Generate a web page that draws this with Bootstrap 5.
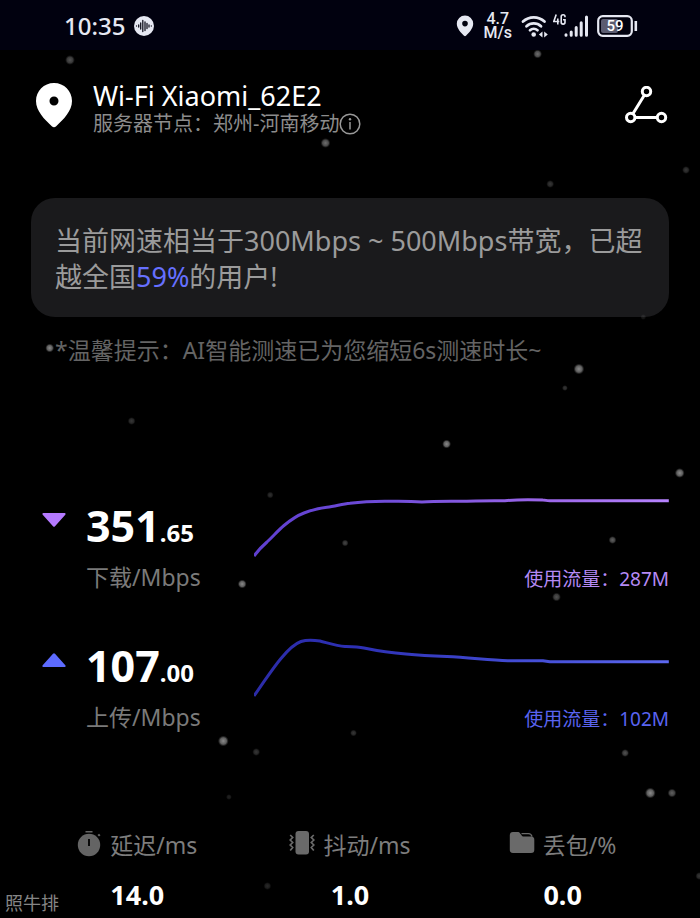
<!DOCTYPE html>
<html lang="zh-CN" data-bs-theme="dark">
<head>
<meta charset="utf-8">
<meta name="viewport" content="width=device-width, initial-scale=1">
<title>网络测速</title>
<link href="https://cdn.jsdelivr.net/npm/bootstrap@5.3.0/dist/css/bootstrap.min.css" rel="stylesheet">
<style>
  body { background: #000; color: #fff; font-family: "Noto Sans", "Noto Sans CJK SC", sans-serif; overflow-x: hidden; }
  svg { display: block; flex: none; }
  .speed-page { min-height: 100vh; }
  .status-strip { background: #01010f; color: #e6e8f2; height: 50px; padding: 2px 62px 0 64px; }
  .clock { font-size: 24px; line-height: 32px; font-weight: 500; }
  .rate { font-family: Roboto, sans-serif; font-size: 16px; line-height: 14px; font-weight: 500; text-align: center; margin: 0 9px 0 10px; }
  .page-pad { padding-left: 31px; padding-right: 31px; }
  .server-bar { padding-top: 32px; }
  .pin-slot { margin: 1px 20px 0 5px; }
  .net-name { font-size: 27px; line-height: 28px; font-weight: 400; }
  .node-line { font-size: 20px; line-height: 28px; color: #8c8c8c; }
  .plain-btn { background: none; border: 0; padding: 0; color: inherit; }
  .summary-box { margin-top: 60px; background: #1a1a1c; border-radius: 24px; padding: 25px 16px 22px 24px; color: #9b9b9b; font-size: 27px; line-height: 36px; }
  .percent { color: #6670ff; }
  .hint { margin: 19px 0 0 24px; font-size: 23px; line-height: 28px; color: #646464; }
  .results { margin-top: 132px; }
  .result-row { height: 140px; }
  .result-main { width: 35%; }
  .arrow-slot { margin: 17px 20px 0 11px; }
  .big-num { font-size: 43px; line-height: 60px; font-weight: 700; }
  .big-num small { font-size: 24px; font-weight: 700; }
  .unit { font-size: 23px; line-height: 28px; color: #7a7a7a; }
  .curve { width: 100%; height: 64px; }
  .curve path { fill: none; stroke-width: 3; vector-effect: non-scaling-stroke; stroke-linecap: butt; stroke-linejoin: round; }
  .usage { font-size: 19px; line-height: 28px; margin-top: 5px; text-align: right; }
  .usage-down { color: #b58af5; }
  .usage-up { color: #5a64f0; }
  .stat-title { font-size: 23px; line-height: 32px; color: #7d7d7d; gap: 8px; }
  .stat-value { font-size: 27px; line-height: 36px; font-weight: 700; margin-top: 16px; }
  .stats { margin-top: 53px; }
  .watermark { position: absolute; left: 5px; bottom: 3px; font-size: 18px; line-height: 24px; color: #858585; }
  .stars { position: absolute; left: 0; top: 0; width: 100%; height: 918px; pointer-events: none; }
</style>
<script src="https://cdn.jsdelivr.net/npm/bootstrap@5.3.0/dist/js/bootstrap.bundle.min.js"></script>
</head>
<body>
<div class="speed-page position-relative">

  <div class="status-strip d-flex align-items-center">
    <span class="clock">10:35</span>
    <svg class="ms-2" width="22" height="22" viewBox="0 0 22 22"><circle cx="11" cy="11" r="10" fill="#e6e8f2"/><g stroke="#12121f" stroke-width="1.3" stroke-linecap="round"><path d="M3.5 11h0M5.700 10v2M7.700 8v6M9.800 5.500v11M12 7v8.500M14 8.500v5M16 10v2M18.300 11h0"/></g></svg>
    <svg class="ms-auto" width="18" height="22" viewBox="0 0 18 22"><path fill="#e6e8f2" fill-rule="evenodd" d="M9 .5A8.200 8.200 0 0 0 .8 8.800c0 4.500 4.300 9.200 7.200 12a1.500 1.500 0 0 0 2 0c2.900-2.800 7.200-7.500 7.200-12A8.200 8.200 0 0 0 9 .5zm0 5.300a2.800 2.800 0 1 1 0 5.600 2.800 2.800 0 0 1 0-5.600z"/></svg>
    <div class="rate">4.7<br>M/s</div>
    <svg width="28" height="24" viewBox="0 0 28 24"><g fill="none" stroke="#e6e8f2" stroke-width="2.800" stroke-linecap="round"><path d="M2 7.500a16 16 0 0 1 21.500 0"/><path d="M5.500 12.200a10.800 10.800 0 0 1 14.500 0"/><path d="M9 16.200a5.800 5.800 0 0 1 7.500 0"/></g><circle cx="12.700" cy="20.500" r="2.300" fill="#e6e8f2"/><path fill="#e6e8f2" d="M21.500 17.500v6l-3.600-3zM23.200 17.500v6l3.600-3z"/></svg>
    <svg width="36" height="26" viewBox="0 0 36 26" class="ms-1"><g transform="translate(-1 0)"><g fill="none" stroke="#e6e8f2" stroke-width="1.600"><path d="M4.200 1.500L1.800 8.500h5.500M5.800 5.500v6"/><path d="M13 4.300V3.600a1.900 1.900 0 0 0-3.800 0v5.600a1.900 1.900 0 0 0 3.800 0V6.800h-2"/></g><g stroke="#e6e8f2" stroke-width="3" stroke-linecap="round"><path d="M14 21.700v.5M19.200 19v3.200M24.200 14.500v7.700M29.200 9.700v12.500M34.500 4v18.200"/></g></g></svg>
    <svg class="ms-2" width="41" height="22" viewBox="0 0 41 22" role="img" aria-label="59"><rect x="4" y="4" width="17" height="14" rx="2" fill="#5b5c70"/><rect x="1.200" y="1.200" width="33.600" height="19.600" rx="4.500" fill="none" stroke="#e6e8f2" stroke-width="2.200"/><path d="M38.800 6v10" stroke="#e6e8f2" stroke-width="2.600"/><text x="18" y="16" text-anchor="middle" font-family="Roboto, sans-serif" font-size="15" font-weight="500" fill="#fff">59</text></svg>
  </div>

  <svg class="stars" aria-hidden="true">
    <defs><radialGradient id="star"><stop offset="0" stop-color="#8a8a8a"/><stop offset=".6" stop-color="#5c5c5c"/><stop offset="1" stop-color="#333" stop-opacity="0"/></radialGradient></defs>
    <g fill="url(#star)">
      <circle cx="10%" cy="60" r="5" opacity=".6"/><circle cx="76.800%" cy="54" r="4.500" opacity=".8"/><circle cx="46.500%" cy="143" r="5" opacity=".8"/>
      <circle cx="78.600%" cy="184" r="4" opacity=".4"/><circle cx="98%" cy="170" r="4" opacity=".4"/><circle cx="7.100%" cy="348" r="4.500"/>
      <circle cx="82.700%" cy="369" r="5.500"/><circle cx="80.700%" cy="388" r="3" opacity=".4"/><circle cx="18.800%" cy="421" r="4" opacity=".4"/>
      <circle cx="63.800%" cy="444" r="4.500"/><circle cx="97.100%" cy="473" r="5"/><circle cx="38.600%" cy="495" r="3.500" opacity=".35"/>
      <circle cx="49.300%" cy="543" r="3.500" opacity=".5"/><circle cx="87.500%" cy="540" r="4" opacity=".7"/><circle cx="34.600%" cy="584" r="4.500"/>
      <circle cx="79.500%" cy="597" r="4.500" opacity=".6"/><circle cx="31.900%" cy="741" r="5.500"/><circle cx="36.600%" cy="752" r="4" opacity=".4"/>
      <circle cx="50.500%" cy="733" r="3.500" opacity=".4"/><circle cx="89.300%" cy="753" r="4" opacity=".6"/><circle cx="92.900%" cy="793" r="5.500"/>
      <circle cx="96%" cy="793" r="4.500" opacity=".7"/><circle cx="32.700%" cy="797" r="3" opacity=".25"/><circle cx="38.200%" cy="886" r="4" opacity=".3"/>
      <circle cx="99.900%" cy="876" r="4" opacity=".4"/><circle cx="91.900%" cy="317" r="3" opacity=".2"/>
    </g>
  </svg>

  <header class="server-bar page-pad d-flex align-items-start">
    <svg class="pin-slot" width="37" height="45" viewBox="0 0 37 45"><path fill="#fff" fill-rule="evenodd" d="M18 0C7.800 0 0 8 0 18c0 10 8.500 18.500 15.800 25.200a3.100 3.100 0 0 0 4.400 0C27.500 36.500 36 28 36 18 36 8 28.200 0 18 0zm0 13.500a4.500 4.500 0 1 1 0 9 4.500 4.500 0 0 1 0-9z"/></svg>
    <div class="flex-grow-1">
      <h1 class="net-name mb-0">Wi-Fi Xiaomi_62E2</h1>
      <div class="node-line d-flex align-items-center">服务器节点：郑州-河南移动
        <button class="plain-btn" type="button" aria-label="节点信息"><svg width="22" height="22" viewBox="0 0 22 22"><g fill="none" stroke="#999" stroke-width="1.500"><circle cx="11" cy="11" r="9.800"/><path d="M11 9v7.500"/></g><circle cx="11" cy="6.200" r="1.200" fill="#999"/></svg></button>
      </div>
    </div>
    <button class="plain-btn mt-1" type="button" aria-label="网络拓扑"><svg width="44" height="38" viewBox="0 0 44 38"><g fill="none" stroke="#fff" stroke-width="3"><circle cx="21.500" cy="5.500" r="4.200"/><circle cx="5.700" cy="31.500" r="4.200"/><circle cx="36.500" cy="31.500" r="4.200"/><path d="M19.300 9.200L7.900 27.800M10 31.500h22"/></g></svg></button>
  </header>

  <main class="page-pad">
    <section class="summary-box">当前网速相当于300Mbps ~ 500Mbps带宽，已超越全国<span class="percent">59%</span>的用户!</section>
    <p class="hint">*温馨提示：AI智能测速已为您缩短6s测速时长~</p>

    <section class="results">
      <div class="result-row d-flex">
        <div class="result-main d-flex align-items-start">
          <svg class="arrow-slot" width="24" height="14" viewBox="0 0 24 14"><path fill="#b57aff" d="M1.500 0h21a1 1 0 0 1 .8 1.700L13 13.300a1.400 1.400 0 0 1-2 0L.7 1.700A1 1 0 0 1 1.500 0z"/></svg>
          <div><div class="big-num">351<small>.65</small></div><div class="unit">下载/Mbps</div></div>
        </div>
        <div class="flex-grow-1">
          <svg class="curve" viewBox="0 0 415 64" preserveAspectRatio="none"><defs><linearGradient id="gd" gradientUnits="userSpaceOnUse" x1="0" y1="0" x2="415" y2="0"><stop offset="0" stop-color="#5f3fd0"/><stop offset=".3" stop-color="#6f4cd8"/><stop offset=".7" stop-color="#9b66e8"/><stop offset="1" stop-color="#b784ff"/></linearGradient></defs><path stroke="url(#gd)" d="M0 60C4 54.500 9 49.500 13 46C19 40.500 24 34.500 30 29.500C36 24.500 42 20 50 17C58 14 66 12 73 11.300C81 10.500 88 8 96 7.300C107 6 119 5.400 131 5.300C145 5 157 5 168 6C180 5 195 5.300 211 5.300C220 4.500 240 4.700 251 4.700C258 4 280 3.700 289 4C292 4 292 4.800 296 4.800H415"/></svg>
          <div class="usage usage-down">使用流量：287M</div>
        </div>
      </div>
      <div class="result-row d-flex">
        <div class="result-main d-flex align-items-start">
          <svg class="arrow-slot" width="24" height="14" viewBox="0 0 24 14"><path fill="#5d6bff" d="M1.500 14h21a1 1 0 0 0 .8-1.700L13 .7a1.400 1.400 0 0 0-2 0L.7 12.300A1 1 0 0 0 1.500 14z"/></svg>
          <div><div class="big-num">107<small>.00</small></div><div class="unit">上传/Mbps</div></div>
        </div>
        <div class="flex-grow-1">
          <svg class="curve" viewBox="0 0 415 64" preserveAspectRatio="none"><defs><linearGradient id="gu" gradientUnits="userSpaceOnUse" x1="0" y1="0" x2="415" y2="0"><stop offset="0" stop-color="#2c2ca8"/><stop offset=".25" stop-color="#2d30b4"/><stop offset=".7" stop-color="#4650d8"/><stop offset="1" stop-color="#5d68f0"/></linearGradient></defs><path stroke="url(#gu)" d="M0 60C9 47 19 32 27 22.500C34 14 40 8 47 5.500C53 3.500 60 4 66 5C74 7 83 10 91 10.500C98 10.700 104 10.800 110 12C122 14.500 138 17 152 18C166 19.300 180 20 193 20.500C215 21.500 235 24 254 24.700C266 24.800 280 24.500 289 24.800L296 25.700H415"/></svg>
          <div class="usage usage-up">使用流量：102M</div>
        </div>
      </div>
    </section>

    <section class="stats row g-0 text-center">
      <div class="col-4">
        <div class="stat-title d-flex justify-content-center align-items-center"><svg width="25" height="28" viewBox="0 0 25 28"><g fill="#646464"><circle cx="12" cy="14" r="11.200"/><path d="M8.500 0h7v1.600h-7zM20.500 4l1.600-1.300 1.400 1.600-1.500 1.200z"/></g><path d="M12 8v7" stroke="#000" stroke-width="1.800"/></svg>延迟/ms</div>
        <div class="stat-value">14.0</div>
      </div>
      <div class="col-4">
        <div class="stat-title d-flex justify-content-center align-items-center"><svg width="26" height="28" viewBox="0 0 26 28"><rect x="6.500" y="0" width="13.500" height="23.500" rx="3" fill="#6a6a6a"/><path fill="none" stroke="#6a6a6a" stroke-width="1.700" d="M1.200 4l2.500 2.500L1.200 9l2.500 2.500-2.500 2.500 2.500 2.500-2.500 3M24.800 4l-2.500 2.500 2.500 2.500-2.500 2.500 2.500 2.500-2.500 2.500 2.500 3"/></svg>抖动/ms</div>
        <div class="stat-value">1.0</div>
      </div>
      <div class="col-4">
        <div class="stat-title d-flex justify-content-center align-items-center"><svg width="26" height="26" viewBox="0 0 26 26"><path fill="#6a6a6a" d="M4 0h4.500c1.200 0 2 .5 2.700 1.400l1.500 2c.5.700 1 1.100 1.900 1.100H22A3.300 3.300 0 0 1 25.300 8v9.500A3.300 3.300 0 0 1 22 21H4A3.300 3.300 0 0 1 .8 17.500V3.300A3.300 3.300 0 0 1 4 0z"/><path fill="none" stroke="#6a6a6a" stroke-width="1.300" d="M12.500 1.700h7c2 0 3 .8 3.500 3"/></svg>丢包/%</div>
        <div class="stat-value">0.0</div>
      </div>
    </section>
  </main>
  <div class="watermark">照牛排</div>
</div>
</body>
</html>
